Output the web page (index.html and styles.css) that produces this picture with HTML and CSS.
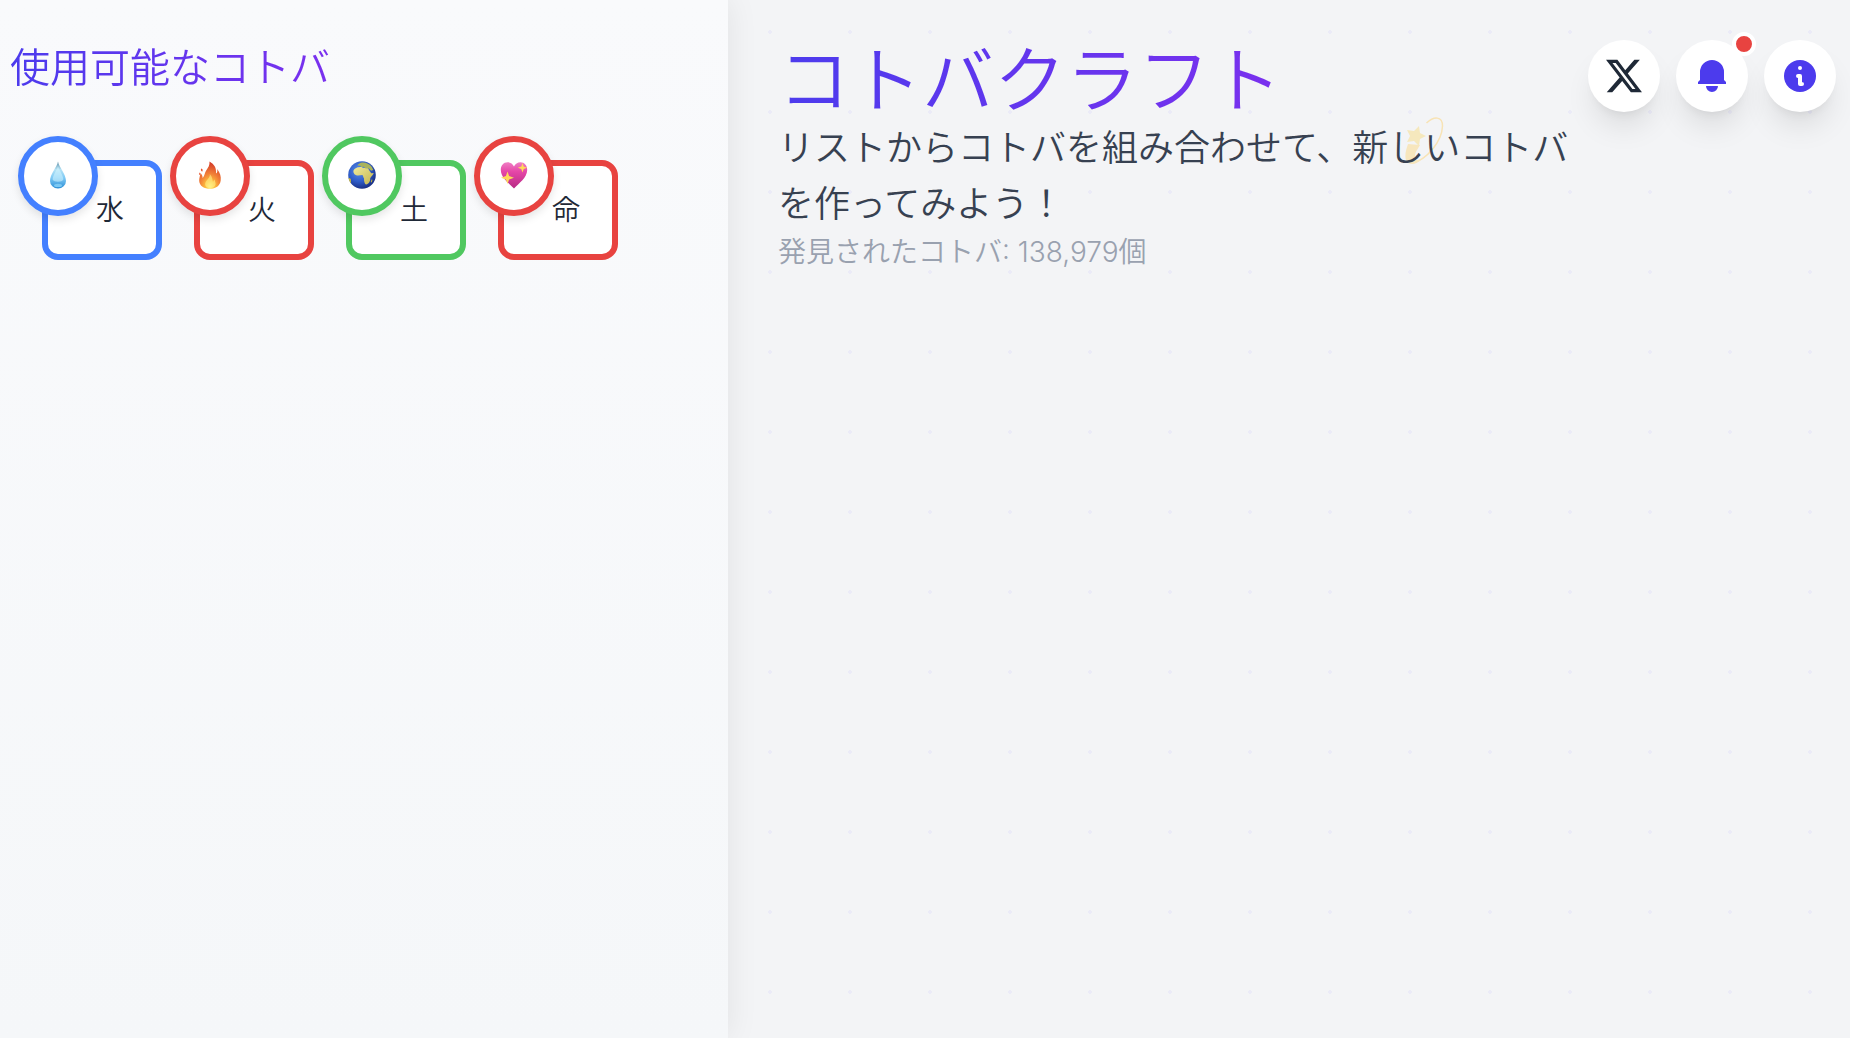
FILE: index.html
```html
<!DOCTYPE html>
<html lang="ja">
<head>
  <meta charset="UTF-8">
  <meta name="viewport" content="width=device-width, initial-scale=1.0">
  <title>コトバクラフト</title>
  <link rel="stylesheet" href="styles.css">
</head>
<body>

<div class="app">
  <aside class="sidebar">
    <h2 class="sidebar-title">使用可能なコトバ</h2>

    <div class="word-list">
      <button type="button" class="word word-blue">
        <span class="word-icon">
          <svg viewBox="0 0 28 28" aria-hidden="true">
            <defs>
              <linearGradient id="dropFill" x1="0" y1="0" x2="0" y2="1">
                <stop offset="0" stop-color="#5f8fa8"/>
                <stop offset="0.3" stop-color="#b4e2f5"/>
                <stop offset="0.6" stop-color="#7fcaf5"/>
                <stop offset="1" stop-color="#2d8fd6"/>
              </linearGradient>
            </defs>
            <path d="M14 0.5C13 6 6 13 6 20a8 7.5 0 0 0 16 0C22 13 15 6 14 0.5z" fill="url(#dropFill)"/>
            <path d="M14 5C13 9 9 14 8.6 18.5c1.5 3 9.3 3 10.8 0C19 14 15 9 14 5z" fill="#d5f5ff" opacity="0.55"/>
            <ellipse cx="14" cy="24.4" rx="4" ry="1.6" fill="#7cc9f4"/>
          </svg>
        </span>
        <span class="word-text">水</span>
      </button>

      <button type="button" class="word word-red">
        <span class="word-icon">
          <svg viewBox="0 0 28 28" aria-hidden="true">
            <defs>
              <radialGradient id="fireFill" cx="0.5" cy="0.92" r="0.85">
                <stop offset="0" stop-color="#fff27a"/>
                <stop offset="0.25" stop-color="#fdbd3b"/>
                <stop offset="0.55" stop-color="#f28238"/>
                <stop offset="1" stop-color="#d6402a"/>
              </radialGradient>
            </defs>
            <path d="M13.5 0.5c5 3 7 6.5 6.5 12 1.5-1 1.500-2.500 1.200-4.500 3 4 4 7.500 3.500 11.500-.7 5.500-5 8.300-10.700 8.300S3.500 25 3.200 20c-.2-3 1-5 1.300-8 1.500 1.500 2 3 2.200 5C9 14 8.500 12 10.500 9c1.800-2.800 3.300-4.500 3-8.500z" fill="url(#fireFill)"/>
            <path d="M13.800 13c.5 4-3.500 5.500-4.500 9-.8 3.500 1.700 5 4.900 5s5.800-1.500 5.300-5c-.2-1.500-.9-2.500-1-3.500-.8.7-1.200 1.500-1.500 2.500-.7-3-.7-5-3.200-8z" fill="#fff08a" opacity="0.6"/>
            <path d="M5.200 7.500c1.400.3 2 1.500 1 3.200-1.300-.7-1.700-1.800-1-3.200zM3.500 11.500c.9.700 1 1.700.3 2.800-.7-.8-.8-1.800-.3-2.800z" fill="#e8552f"/>
          </svg>
        </span>
        <span class="word-text">火</span>
      </button>

      <button type="button" class="word word-green">
        <span class="word-icon">
          <svg viewBox="0 0 28 28" aria-hidden="true">
            <defs>
              <radialGradient id="seaFill" cx="0.4" cy="0.35" r="0.65">
                <stop offset="0" stop-color="#5b90e8"/>
                <stop offset="0.6" stop-color="#2f5cc8"/>
                <stop offset="1" stop-color="#1b3286"/>
              </radialGradient>
              <linearGradient id="landFill" x1="0" y1="0" x2="1" y2="1">
                <stop offset="0" stop-color="#f1eb9a"/>
                <stop offset="1" stop-color="#c2b44e"/>
              </linearGradient>
            </defs>
            <circle cx="14" cy="14" r="13.800" fill="url(#seaFill)"/>
            <path d="M5.500 9.500c1.500-3 4.500-3.600 8-3.600 1.500 1.500 4 .8 6.700 1.300.8 2 2 3.500 3 5l2.500-.3c-.5 2.300-2.700 3.500-3.500 5.300.3 3-1.800 6-4 6.300-1.800-.6-2.200-3.800-2.200-6.300-1.300-1.300-.5-2.700-1.800-3.200-2.500.3-5.500 1.200-7.700-.8-.8-1.200-1.300-2.300-1-3.700z" fill="url(#landFill)"/>
            <path d="M9.500 4.500c.5-1.500 2-2 3.300-2.800 4-.9 8.500.8 11 4.300l1.500 3-2.200.8-2.500-2.500-3 .2-2-1.800-2.300.3-1.300-1.300z" fill="#a9b35c"/>
            <path d="M0.600 17c1.500 0 2.500.8 2.300 2.300 0 1 .3 2.200 0 3C1.500 20.700 0.800 18.800 0.600 17zM23.500 18.500l1 .2-.8 2.800-.9-.5z" fill="#c9b83e"/>
          </svg>
        </span>
        <span class="word-text">土</span>
      </button>

      <button type="button" class="word word-red">
        <span class="word-icon">
          <svg viewBox="0 0 28 28" aria-hidden="true">
            <defs>
              <linearGradient id="heartFill" x1="0" y1="0" x2="0" y2="1">
                <stop offset="0" stop-color="#f07fc4"/>
                <stop offset="0.35" stop-color="#e647a8"/>
                <stop offset="1" stop-color="#b72a84"/>
              </linearGradient>
            </defs>
            <path d="M14 27.500C9 22 1 17 .8 9 .7 4.500 3.500 1.200 7.500 1.200c3 0 5.300 1.800 6.500 4.300 1.200-2.500 3.500-4.300 6.500-4.300 4 0 6.800 3.300 6.700 7.800C27 17 19 22 14 27.500z" fill="url(#heartFill)"/>
            <path d="M7.500 10.500l1.600 4.600 4.900 1.700-4.900 1.700-1.600 4.600-1.600-4.600-4.900-1.700 4.900-1.700z" fill="#ffd95a"/>
            <path d="M22.500 2l1.200 3.500 3.500 1.200-3.500 1.200-1.200 3.500-1.200-3.500-3.500-1.200 3.500-1.200z" fill="#ffd95a"/>
          </svg>
        </span>
        <span class="word-text">命</span>
      </button>
    </div>
  </aside>

  <main class="board">
    <header class="board-header">
      <div class="intro">
        <!-- shooting star floating behind the text -->
        <svg class="star" viewBox="0 0 40 50" aria-hidden="true">
          <path d="M22.500 7C30 0 38.500 0 38.500 10 38 25 23 44 8 47" fill="none" stroke="#f9dfa5" stroke-width="1.500"/>
          <path d="M4 28C1 36 0 44 4 47c4 2 9 1 14-4-5 2-8 1-7-3 0-4 3-7 5-11z" fill="#f9e3b0"/>
          <path d="M15 10l1 7 6 3-6 3-1 7-5-5-7 1 3-6-3-6 7 1z" fill="#f6e6b0"/>
        </svg>
        <h1 class="logo">コトバクラフト</h1>
        <p class="lead">リストからコトバを組み合わせて、新しいコトバを作ってみよう！</p>
        <p class="count">発見されたコトバ: 138,979個</p>
      </div>

      <nav class="actions">
        <a class="action action-dark" href="#" aria-label="X">
          <svg class="icon-x" viewBox="0 0 24 24" aria-hidden="true"><path d="M18.205 2.250h3.308l-7.227 8.260 8.502 11.240H16.130l-5.214-6.817L4.950 21.750H1.640l7.730-8.835L1.215 2.250H8.040l4.713 6.231zm-1.161 17.520h1.833L7.045 4.126H5.078z"/></svg>
        </a>
        <button type="button" class="action" aria-label="お知らせ">
          <svg class="icon" viewBox="0 0 32 32" aria-hidden="true"><path d="M4 20v-8a12 12 0 0 1 24 0v8l2 2v2H2v-2zM10 26h12a6 6 0 0 1-12 0z"/></svg>
          <span class="badge"></span>
        </button>
        <button type="button" class="action" aria-label="情報">
          <svg class="icon" viewBox="0 0 32 32" aria-hidden="true">
            <circle cx="16" cy="16" r="16"/>
            <circle class="icon-cut" cx="16" cy="8" r="2"/>
            <path class="icon-line" d="M14 16h2v8h2"/>
          </svg>
        </button>
      </nav>
    </header>
  </main>
</div>

</body>
</html>
```
FILE: styles.css
```css
* {
  box-sizing: border-box;
}

body {
  margin: 0;
  font-family: Inter, "Noto Sans CJK JP", sans-serif;
  font-weight: 350;
  color: #1f2937;
}

h1, h2, p {
  margin: 0;
  font-weight: 350;
}

button {
  font: inherit;
  color: inherit;
  cursor: pointer;
}

.app {
  display: flex;
  min-height: 100vh;
}

.sidebar {
  flex: 0 0 728px;
  padding: 40px 10px;
  background: linear-gradient(#f9fafc, #f5f7f9);
  box-shadow: 0 0 30px rgba(0, 0, 0, 0.08);
  z-index: 1;
}

.sidebar-title {
  width: fit-content;
  font-size: 40px;
  line-height: 56px;
}

.sidebar-title,
.logo {
  background: linear-gradient(90deg, #4c3bed, #7a30ee);
  -webkit-background-clip: text;
  background-clip: text;
  color: transparent;
}

.word-list {
  display: flex;
  flex-wrap: wrap;
  gap: 32px;
  padding: 64px 32px;
}

.word {
  position: relative;
  width: 120px;
  height: 100px;
  padding: 0 0 4px 16px;
  border: 6px solid;
  border-radius: 16px;
  background: #fff;
}

.word-icon {
  position: absolute;
  top: -30px;
  left: -30px;
  display: flex;
  align-items: center;
  justify-content: center;
  width: 80px;
  height: 80px;
  padding-bottom: 2px;
  border: 6px solid;
  border-color: inherit;
  border-radius: 50%;
  background: #fff;
  box-shadow: 0 4px 8px rgba(0, 0, 0, 0.1);
}

.word-icon svg {
  width: 28px;
  height: 28px;
}

.word-text {
  font-size: 28px;
}

.word-blue {
  border-color: #4480ff;
}

.word-red {
  border-color: #e84340;
}

.word-green {
  border-color: #50c860;
}

.board {
  flex: 1;
  min-width: 0;
  background-color: #f3f4f6;
  background-image: radial-gradient(circle, #ebebf7 2px, transparent 2px);
  background-size: 80px 80px;
  background-position: 2px -8px;
}

.board-header {
  display: flex;
  align-items: flex-start;
  gap: 16px;
  padding: 40px 14px 40px 50px;
}

.intro {
  position: relative;
  z-index: 0;
  flex: 1;
}

.logo {
  width: fit-content;
  font-size: 72px;
  line-height: 80px;
}

.lead {
  font-size: 36px;
  line-height: 56px;
  color: #374151;
}

.count {
  font-size: 28px;
  line-height: 40px;
  color: #99a1af;
}

.star {
  position: absolute;
  z-index: -1;
  top: 76px;
  left: 626px;
  width: 40px;
  height: 50px;
  opacity: 0.8;
}

.actions {
  display: flex;
  gap: 16px;
}

.action {
  position: relative;
  display: flex;
  align-items: center;
  justify-content: center;
  width: 72px;
  height: 72px;
  padding: 0;
  border: none;
  border-radius: 50%;
  background: #fff;
  color: #4c3bed;
  box-shadow: 0 20px 30px -6px rgba(0, 0, 0, 0.1), 0 8px 12px -8px rgba(0, 0, 0, 0.1);
}

.action-dark {
  color: #1f2937;
}

.action svg {
  fill: currentColor;
}

.icon {
  width: 32px;
  height: 32px;
}

.icon-x {
  width: 40px;
  height: 40px;
}

.action .icon-cut {
  fill: #fff;
}

.action .icon-line {
  fill: none;
  stroke: #fff;
  stroke-width: 4;
  stroke-linecap: round;
  stroke-linejoin: round;
}

.badge {
  position: absolute;
  top: -8px;
  right: -8px;
  width: 24px;
  height: 24px;
  border: 4px solid #fff;
  border-radius: 50%;
  background: #e84340;
}
```
